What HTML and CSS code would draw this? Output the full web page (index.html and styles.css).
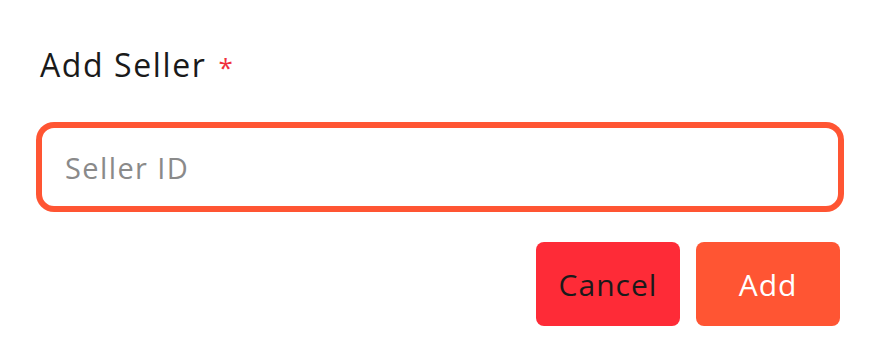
FILE: index.html
```html
<!DOCTYPE html>
<html lang="en">
<head>
<meta charset="utf-8">
<title>Add Seller</title>
<link rel="stylesheet" href="styles.css">
</head>
<body>
<form class="dialog">
  <label class="label" for="seller">Add Seller<span class="req">*</span></label>
  <input class="field" id="seller" type="text" placeholder="Seller ID">
  <div class="actions">
    <button type="button" class="btn btn-cancel">Cancel</button>
    <button type="submit" class="btn btn-add">Add</button>
  </div>
</form>
</body>
</html>
```

FILE: styles.css
```css
* { box-sizing: border-box; }
html, body { margin: 0; background: #ffffff; }
body {
  font-family: "Open Sans", "Noto Sans", sans-serif;
}
.dialog {
  display: flex;
  flex-direction: column;
  padding: 40px 38px 40px 40px;
}
.label {
  font-size: 32px;
  font-weight: 500;
  line-height: 40px;
  letter-spacing: 1.6px;
  color: #1a1a1a;
  height: 42px;
  padding-top: 5px;
  margin-bottom: 44px;
}
.req {
  color: #f0303c;
  font-size: 26px;
  margin-left: 12px;
}
.field {
  display: block;
  width: 100%;
  height: 82px;
  border: 2px solid #ff5533;
  border-radius: 14px;
  box-shadow: 0 0 0 4px #ff5533;
  outline: none;
  padding: 0 23px;
  font-family: inherit;
  font-size: 29px;
  font-weight: 500;
  letter-spacing: 1.4px;
  color: #1a1a1a;
}
.field::placeholder { color: #8a8a8a; }
.actions {
  display: flex;
  justify-content: flex-end;
  gap: 16px;
  margin-top: 34px;
}
.btn {
  width: 144px;
  height: 84px;
  border: none;
  border-radius: 8px;
  font-family: inherit;
  font-size: 30px;
  font-weight: 500;
  letter-spacing: 1px;
  cursor: pointer;
}
.btn-cancel { background: #fe2b37; color: #1a1a1a; }
.btn-add { background: #ff5533; color: #ffffff; }
```
